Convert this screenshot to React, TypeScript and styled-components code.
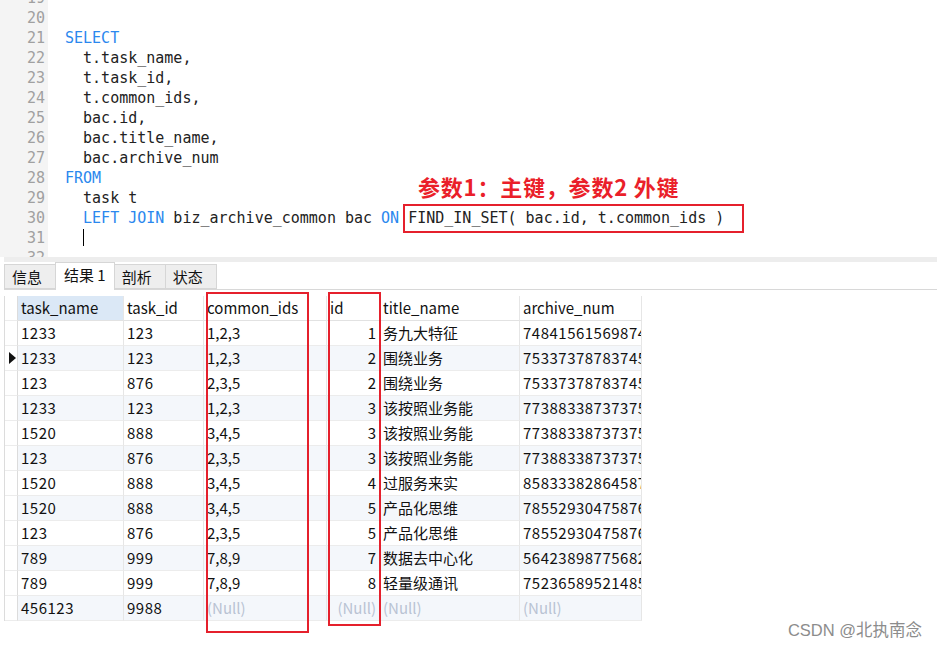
import React from "react";
import styled, {createGlobalStyle} from "styled-components";

const GlobalStyle = createGlobalStyle`
  html, body {
    margin: 0;
    padding: 0;
    background: #fff;
  }
  body {
    font-family: "Noto Sans CJK SC", "Noto Sans", sans-serif;
    overflow: hidden;
  }
`

const Page = styled.div`
  position: relative;
  width: 937px;
  height: 649px;
  overflow: hidden;
  background: #fff;
`

const Editor = styled.div`
  position: relative;
  height: 257px;
  overflow: hidden;
  display: flex;
`

const Gutter = styled.div`
  width: 48px;
  background: #f4f4f4;
  flex-shrink: 0;
`

const Code = styled.div`
  margin-top: -12px;
  flex: 1;
  font-family: "DejaVu Sans Mono", "Liberation Mono", monospace;
  font-size: 15px;
  color: #222;
`

const LineRow = styled.div`
  display: flex;
  height: 20px;
  line-height: 20px;
  white-space: pre;
  margin-left: -48px;
`

const LineNo = styled.span`
  width: 45px;
  padding-right: 3px;
  text-align: right;
  color: #a0a0a0;
  flex-shrink: 0;
`

const LineText = styled.span`
  padding-left: 17px;
  position: relative;
`

const Kw = styled.span`
  color: #2b88ee;
`

const Boxed = styled.span`
  position: relative;
  &::after {
    content: "";
    position: absolute;
    left: -5px;
    right: -20px;
    top: -5px;
    bottom: -6px;
    border: 2px solid #e5202c;
  }
`

const Caret = styled.span`
  display: inline-block;
  width: 1px;
  height: 17px;
  background: #000;
  vertical-align: middle;
  margin-top: -2px;
`

const Note = styled.div`
  position: absolute;
  left: 418px;
  top: 172px;
  color: #ea1f2a;
  font-weight: bold;
  font-size: 22px;
  letter-spacing: 0.8px;
  line-height: 28px;
  white-space: pre;
`

const ResultPanel = styled.div`
  margin-left: 4px;
  border-top: 5px solid #ededed;
`

const TabStrip = styled.div`
  display: flex;
  align-items: flex-end;
  height: 27px;
  border-bottom: 1px solid #d8d8d8;
`

const Tab = styled.div<{ $active?: boolean }>`
  box-sizing: border-box;
  height: ${p => p.$active ? "28px" : "25px"};
  margin-bottom: ${p => p.$active ? "-1px" : "0"};
  padding: 0 ${p => p.$active ? "8px" : "7px"};
  min-width: ${p => p.$active ? "58px" : "52px"};
  background: ${p => p.$active ? "#fff" : "#eeeeee"};
  border: 1px solid #d6d6d6;
  border-bottom: ${p => p.$active ? "none" : "1px solid #d6d6d6"};
  margin-right: -1px;
  font-size: 15px;
  line-height: 24px;
  color: #111;
`

const GridWrap = styled.div`
  position: relative;
  margin-top: 6px;
`

const Grid = styled.div`
  display: grid;
  grid-template-columns: 13px 106px 80px 123px 53px 140px 122px;
  border-left: 1px solid #dcdcdc;
  width: max-content;
`

const Cell = styled.div<{ $head?: boolean; $sel?: boolean; $right?: boolean; $null?: boolean; $stripe?: boolean }>`
  box-sizing: border-box;
  height: 25px;
  line-height: 24px;
  padding: 0 3px;
  font-size: 15px;
  white-space: nowrap;
  overflow: hidden;
  text-overflow: clip;
  text-align: ${p => p.$right ? "right" : "left"};
  color: ${p => p.$null ? "#b9c3d3" : "#111"};
  background: ${p => p.$sel ? "#dbe8f6" : p.$stripe ? "#f4f7fb" : "#fff"};
  border-right: 1px solid #e6e6e6;
  border-bottom: 1px solid ${p => p.$head ? "#e2e2e2" : "#ececec"};
`

const Num = styled.span`
  letter-spacing: 0.5px;
`

const Indicator = styled.div`
  box-sizing: border-box;
  height: 25px;
  border-right: 1px solid #dcdcdc;
  border-bottom: 1px solid #ececec;
  display: flex;
  align-items: center;
  justify-content: center;
  background: #fff;
`

const Arrow = styled.span`
  width: 0;
  height: 0;
  border-top: 6px solid transparent;
  border-bottom: 6px solid transparent;
  border-left: 7px solid #111;
  margin-left: 2px;
`

const RedBox = styled.div<{ $left: number; $width: number; $top: number; $height: number }>`
  position: absolute;
  left: ${p => p.$left}px;
  width: ${p => p.$width}px;
  top: ${p => p.$top}px;
  height: ${p => p.$height}px;
  border: 2px solid #e5202c;
  box-sizing: border-box;
  pointer-events: none;
`

const Watermark = styled.div`
  position: absolute;
  right: 15px;
  bottom: 8px;
  font-family: "Liberation Sans", "Noto Sans CJK SC", sans-serif;
  font-size: 16.5px;
  color: #8c8c8c;
`

type Row = [string, string, string, string, string, string]

const rows: Row[] = [
    ["1233", "123", "1,2,3", "1", "务九大特征", "748415615698745"],
    ["1233", "123", "1,2,3", "2", "围绕业务", "753373787837451"],
    ["123", "876", "2,3,5", "2", "围绕业务", "753373787837451"],
    ["1233", "123", "1,2,3", "3", "该按照业务能", "773883387373759"],
    ["1520", "888", "3,4,5", "3", "该按照业务能", "773883387373759"],
    ["123", "876", "2,3,5", "3", "该按照业务能", "773883387373759"],
    ["1520", "888", "3,4,5", "4", "过服务来实", "858333828645878"],
    ["1520", "888", "3,4,5", "5", "产品化思维", "785529304758761"],
    ["123", "876", "2,3,5", "5", "产品化思维", "785529304758761"],
    ["789", "999", "7,8,9", "7", "数据去中心化", "564238987756823"],
    ["789", "999", "7,8,9", "8", "轻量级通讯", "752365895214853"],
    ["456123", "9988", "", "", "", ""],
]

const N = "(Null)"

const App: React.FC = () => {
    const code: React.ReactNode[] = [
        "",
        "",
        <Kw>SELECT</Kw>,
        "  t.task_name,",
        "  t.task_id,",
        "  t.common_ids,",
        "  bac.id,",
        "  bac.title_name,",
        "  bac.archive_num",
        <Kw>FROM</Kw>,
        "  task t",
        <>{"  "}<Kw>LEFT JOIN</Kw>{" biz_archive_common bac "}<Kw>ON</Kw>{" "}<Boxed>FIND_IN_SET( bac.id, t.common_ids )</Boxed></>,
        <>{"  "}<Caret/></>,
        "",
    ]

    return <Page>
        <GlobalStyle/>
        <Editor>
            <Gutter/>
            <Code>
                {code.map((c, i) => (
                    <LineRow key={i}>
                        <LineNo>{19 + i}</LineNo>
                        <LineText>{c}</LineText>
                    </LineRow>
                ))}
            </Code>
            <Note>参数1：主键，参数2 外键</Note>
        </Editor>

        <ResultPanel>
            <TabStrip>
                <Tab>信息</Tab>
                <Tab $active>结果 1</Tab>
                <Tab>剖析</Tab>
                <Tab>状态</Tab>
            </TabStrip>

            <GridWrap>
                <Grid>
                    <Indicator/>
                    <Cell $head $sel>task_name</Cell>
                    <Cell $head>task_id</Cell>
                    <Cell $head>common_ids</Cell>
                    <Cell $head>id</Cell>
                    <Cell $head>title_name</Cell>
                    <Cell $head>archive_num</Cell>
                    {rows.map((r, i) => {
                        const stripe = i % 2 === 1 || i === rows.length - 1
                        return <React.Fragment key={i}>
                            <Indicator>{i === 1 && <Arrow/>}</Indicator>
                            <Cell $stripe={stripe}><Num>{r[0]}</Num></Cell>
                            <Cell $stripe={stripe}><Num>{r[1]}</Num></Cell>
                            <Cell $stripe={stripe} $null={!r[2]}>{r[2] || N}</Cell>
                            <Cell $stripe={stripe} $right $null={!r[3]}>{r[3] || N}</Cell>
                            <Cell $stripe={stripe} $null={!r[4]}>{r[4] || N}</Cell>
                            <Cell $stripe={stripe} $null={!r[5]}>{r[5] ? <Num>{r[5]}</Num> : N}</Cell>
                        </React.Fragment>
                    })}
                </Grid>
                <RedBox $left={202} $width={103} $top={-4} $height={341}/>
                <RedBox $left={324} $width={53} $top={-4} $height={334}/>
            </GridWrap>
        </ResultPanel>

        <Watermark>CSDN @北执南念</Watermark>
    </Page>
}

export default App;
